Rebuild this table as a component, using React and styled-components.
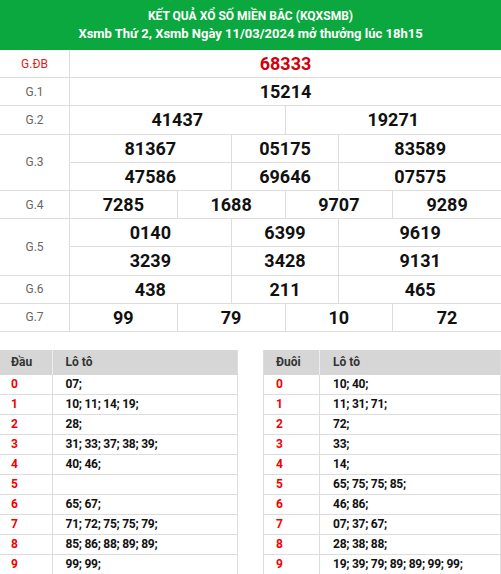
import React from 'react';
import styled, { createGlobalStyle } from 'styled-components';

const GlobalStyle = createGlobalStyle`
    body {
        margin: 0;
        background: #fff;
        font-family: Roboto, "Liberation Sans", sans-serif;
    }
`

const Page = styled.div`
    width: 501px;
`

const Header = styled.div`
    background-color: #0aa83e;
    color: #fff;
    height: 50px;
    display: flex;
    flex-direction: column;
    align-items: center;
    justify-content: center;
    gap: 3px;
    font-weight: 700;
`

const Title = styled.div`
    font-size: 12px;
    text-transform: uppercase;
`

const Subtitle = styled.div`
    font-size: 13px;
`

/* 70px label column, then 8 equal units so G.3 can be 3/2/3 and G.4 2/2/2/2 */
const Results = styled.div`
    display: grid;
    grid-template-columns: 70px repeat(8, 1fr);
    grid-auto-rows: 28.2px;
`

const Label = styled.div`
    grid-row: span ${(p) => p.rows || 1};
    display: flex;
    align-items: center;
    justify-content: center;
    font-size: 12px;
    color: ${(p) => (p.special ? '#e21b23' : '#666')};
    border-right: 1px solid #ddd;
    border-bottom: 1px solid #ddd;
`

const Num = styled.div`
    grid-column: span ${(p) => p.span};
    display: flex;
    align-items: center;
    justify-content: center;
    font-size: 18px;
    font-weight: 700;
    color: ${(p) => (p.special ? '#d3000a' : '#111')};
    border-right: 1px solid #ddd;
    border-bottom: 1px solid #ddd;
    &.end { border-right: none; }
`

const LotoWrap = styled.div`
    display: flex;
    justify-content: space-between;
    margin-top: 18px;
`

const Loto = styled.table`
    width: 238px;
    border-collapse: collapse;
    table-layout: fixed;
    font-size: 12px;
    border-right: 1px solid #ddd;
    border-left: ${(p) => (p.bordered ? '1px solid #ddd' : 'none')};
`

const Th = styled.th`
    box-sizing: border-box;
    background: #d6d6d6;
    color: #333;
    font-weight: 700;
    text-align: left;
    height: 25px;
    padding: 0 0 0 ${(p) => p.pad}px;
    width: ${(p) => p.w || 'auto'};
    border-right: ${(p) => (p.w ? '1px solid #eee' : 'none')};
`

const Head = styled.td`
    color: #f20000;
    font-weight: 700;
    height: 19px;
    padding: 0 0 0 ${(p) => p.pad}px;
    border-right: 1px solid #ddd;
    border-bottom: 1px solid #ddd;
`

const Vals = styled.td`
    color: #111;
    font-weight: 700;
    letter-spacing: -0.25px;
    white-space: nowrap;
    padding: 0 0 0 ${(p) => p.pad}px;
    border-bottom: 1px solid #ddd;
`

const prizes = [
    { label: 'G.ĐB', special: true, rows: [[['68333', 8]]] },
    { label: 'G.1', rows: [[['15214', 8]]] },
    { label: 'G.2', rows: [[['41437', 4], ['19271', 4]]] },
    { label: 'G.3', rows: [
        [['81367', 3], ['05175', 2], ['83589', 3]],
        [['47586', 3], ['69646', 2], ['07575', 3]],
    ] },
    { label: 'G.4', rows: [[['7285', 2], ['1688', 2], ['9707', 2], ['9289', 2]]] },
    { label: 'G.5', rows: [
        [['0140', 3], ['6399', 2], ['9619', 3]],
        [['3239', 3], ['3428', 2], ['9131', 3]],
    ] },
    { label: 'G.6', rows: [[['438', 3], ['211', 2], ['465', 3]]] },
    { label: 'G.7', rows: [[['99', 2], ['79', 2], ['10', 2], ['72', 2]]] },
];

const dau = ['07;', '10; 11; 14; 19;', '28;', '31; 33; 37; 38; 39;', '40; 46;', '', '65; 67;', '71; 72; 75; 75; 79;', '85; 86; 88; 89; 89;', '99; 99;'];
const duoi = ['10; 40;', '11; 31; 71;', '72;', '33;', '14;', '65; 75; 75; 85;', '46; 86;', '07; 37; 67;', '28; 38; 88;', '19; 39; 79; 89; 89; 99; 99;'];

function LotoTable({title, items, firstW, pad1, pad2, bordered}){
    return(
        <Loto bordered={bordered}>
            <thead>
                <tr>
                    <Th w={firstW} pad={pad1}>{title}</Th>
                    <Th pad={pad2}>Lô tô</Th>
                </tr>
            </thead>
            <tbody>
                {items.map((v, i) => (
                    <tr key={i}>
                        <Head pad={pad1}>{i}</Head>
                        <Vals pad={pad2}>{v}</Vals>
                    </tr>
                ))}
            </tbody>
        </Loto>
    )
}

export default function App(){
    return(
        <Page>
            <GlobalStyle />
            <Header>
                <Title>Kết quả xổ số miền Bắc (KQXSMB)</Title>
                <Subtitle>Xsmb Thứ 2, Xsmb Ngày 11/03/2024 mở thưởng lúc 18h15</Subtitle>
            </Header>
            <Results>
                {prizes.map((p) => (
                    <React.Fragment key={p.label}>
                        <Label rows={p.rows.length} special={p.special}>{p.label}</Label>
                        {p.rows.map((row) => row.map(([n, span], j) => (
                            <Num key={n} span={span} special={p.special} className={j === row.length - 1 ? 'end' : ''}>{n}</Num>
                        )))}
                    </React.Fragment>
                ))}
            </Results>
            <LotoWrap>
                <LotoTable title="Đầu" items={dau} firstW="52px" pad1={11} pad2={13} />
                <LotoTable title="Đuôi" items={duoi} firstW="56px" pad1={12} pad2={13} bordered />
            </LotoWrap>
        </Page>
    )
}
